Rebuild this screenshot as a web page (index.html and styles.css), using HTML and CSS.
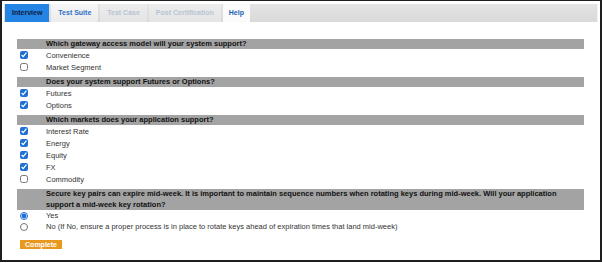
FILE: index.html
```html
<!DOCTYPE html>
<html lang="en">
<head>
    <meta charset="UTF-8">
    <meta name="viewport" content="width=device-width, initial-scale=1.0">
    <title>Certification Interview</title>
    <link rel="stylesheet" href="styles.css">
</head>
<body>

    <div class="frame">
        <ul class="tabs">
            <li class="tab active">Interview</li>
            <li class="tab">Test Suite</li>
            <li class="tab disabled">Test Case</li>
            <li class="tab disabled">Post Certification</li>
            <li class="tab help">Help</li>
        </ul>

        <form class="survey" id="interview-form">
            <div class="question">
                <div class="q-title">Which gateway access model will your system support?</div>
                <label class="option"><input type="checkbox" name="access" checked><span>Convenience</span></label>
                <label class="option"><input type="checkbox" name="access"><span>Market Segment</span></label>
            </div>

            <div class="question">
                <div class="q-title">Does your system support Futures or Options?</div>
                <label class="option"><input type="checkbox" name="product" checked><span>Futures</span></label>
                <label class="option"><input type="checkbox" name="product" checked><span>Options</span></label>
            </div>

            <div class="question">
                <div class="q-title">Which markets does your application support?</div>
                <label class="option"><input type="checkbox" name="market" checked><span>Interest Rate</span></label>
                <label class="option"><input type="checkbox" name="market" checked><span>Energy</span></label>
                <label class="option"><input type="checkbox" name="market" checked><span>Equity</span></label>
                <label class="option"><input type="checkbox" name="market" checked><span>FX</span></label>
                <label class="option"><input type="checkbox" name="market"><span>Commodity</span></label>
            </div>

            <div class="question">
                <div class="q-title">Secure key pairs can expire mid-week. It is important to maintain sequence numbers when rotating keys during mid-week. Will your application support a mid-week key rotation?</div>
                <label class="option radio"><input type="radio" name="rotation" checked><span>Yes</span></label>
                <label class="option radio"><input type="radio" name="rotation"><span>No (If No, ensure a proper process is in place to rotate keys ahead of expiration times that land mid-week)</span></label>
            </div>

            <button type="button" class="complete">Complete</button>
        </form>
    </div>

</body>
</html>
```

FILE: styles.css
```css
* {
    margin: 0;
    padding: 0;
    box-sizing: border-box;
}

body {
    font-family: "Liberation Sans", Arial, sans-serif;
    background-color: #fff;
    color: #333;
}

.frame {
    width: 602px;
    height: 262px;
    border: 2px solid #1e1e1e;
    border-top-width: 1px;
    padding: 3px 2px 0 2px;
}

/* tab strip */
.tabs {
    list-style: none;
    display: flex;
    gap: 2px;
    height: 18px;
    padding-left: 1px;
    background: linear-gradient(#e4e4e4, #d9d9d9);
    border-right: 1px solid #f2f2f2;
}

.tab {
    font-size: 7px;
    font-weight: bold;
    line-height: 18px;
    padding: 0 7px;
    color: #2f6fc4;
    background: linear-gradient(#f6f6f6, #ececec);
}

.tab.active {
    background: #2484e4;
    color: #0c1c44;
}

.tab.disabled {
    color: #b7c4d2;
    background: linear-gradient(#ececec, #e4e4e4);
}

.tab.help {
    background: #fbfbfb;
    color: #1d5fb5;
    padding: 0 6px;
}

/* questions */
.survey {
    margin: 17px 14px 0 13px;
}

.question {
    margin-bottom: 4px;
}

.q-title {
    background-color: #a3a3a3;
    color: #111;
    font-size: 7.5px;
    font-weight: bold;
    line-height: 10px;
    padding: 0 24px 0 29px;
}

.question:last-of-type .q-title {
    line-height: 10.5px;
}

.option {
    display: flex;
    align-items: center;
    height: 12px;
    font-size: 7.5px;
    color: #333;
}

.option.radio {
    height: 11px;
}

.option input {
    width: 8px;
    height: 8px;
    margin: 0 18px 0 3px;
    accent-color: #1f6fd6;
}

.complete {
    display: block;
    margin: 8px 0 0 3px;
    width: 42px;
    height: 9px;
    border: none;
    background-color: #e9981f;
    color: #fff;
    font-family: "Liberation Sans", Arial, sans-serif;
    font-size: 7px;
    font-weight: bold;
    line-height: 9px;
    padding: 0;
}
```
